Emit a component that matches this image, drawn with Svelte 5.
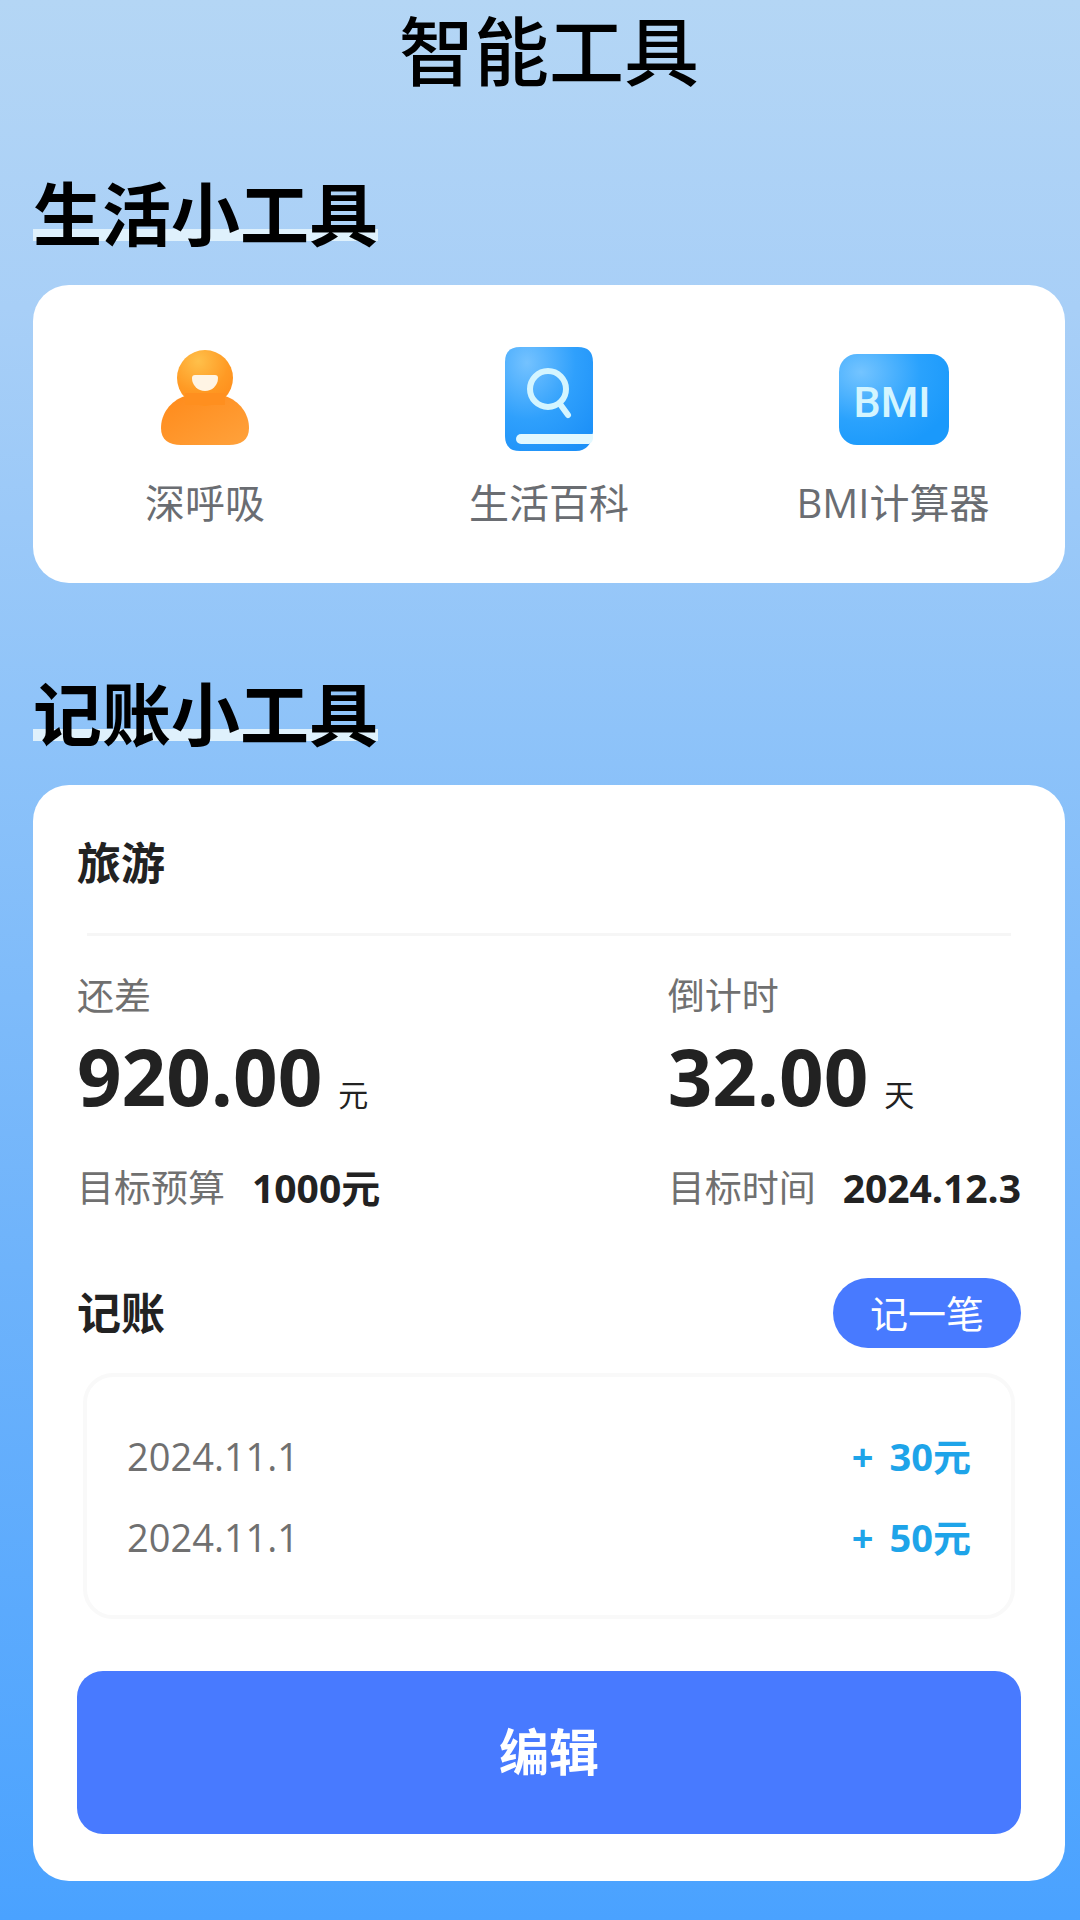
<!--
智能工具页面：生活小工具入口与旅游记账卡片。
-->
<script lang="ts">
	const tools = [
		{ id: 'breath', label: '深呼吸' },
		{ id: 'wiki', label: '生活百科' },
		{ id: 'bmi', label: 'BMI计算器' }
	];

	const stats = [
		{ label: '还差', value: '920.00', unit: '元', targetLabel: '目标预算', target: '1000元' },
		{ label: '倒计时', value: '32.00', unit: '天', targetLabel: '目标时间', target: '2024.12.3' }
	];

	let records = $state([
		{ date: '2024.11.1', amount: 30 },
		{ date: '2024.11.1', amount: 50 }
	]);
</script>

<main class="page">
	<h1>智能工具</h1>

	<section>
		<h2><span>生活小工具</span></h2>
		<div class="card tools">
			{#each tools as tool (tool.id)}
				<button type="button" class="tool">
					<svg class="tool-icon" viewBox="0 0 112 112" aria-hidden="true">
						{#if tool.id === 'breath'}
							<defs>
								<radialGradient id="head" cx="0.38" cy="0.2" r="0.9">
									<stop offset="0" stop-color="#ffc04a" />
									<stop offset="0.6" stop-color="#ff9a24" />
									<stop offset="1" stop-color="#ff8c1a" />
								</radialGradient>
								<linearGradient id="torso" x1="0" y1="0" x2="1" y2="1">
									<stop offset="0" stop-color="#ff8a1a" />
									<stop offset="1" stop-color="#ffa23c" />
								</linearGradient>
							</defs>
							<path
								d="M36 55C21 60 12 73 12 87c0 12 8 17 20 17h48c12 0 20-5 20-17 0-14-9-27-24-32z"
								fill="url(#torso)"
							/>
							<circle cx="56" cy="37" r="28" fill="url(#head)" />
							<path d="M36 52h40v12H36z" fill="#ff8f1f" />
							<path d="M46 34h20q3 0 3 3a13 13 0 0 1-26 0q0-3 3-3z" fill="#fff4e4" />
						{:else if tool.id === 'wiki'}
							<defs>
								<radialGradient id="book" cx="0.25" cy="0.15" r="1">
									<stop offset="0" stop-color="#74c2ff" />
									<stop offset="0.55" stop-color="#2fa0fc" />
									<stop offset="1" stop-color="#1c90f8" />
								</radialGradient>
							</defs>
							<path
								d="M27 6h58q15 0 15 15v70q-2 19-17 19H27q-15 0-15-15V21Q12 6 27 6z"
								fill="url(#book)"
							/>
							<circle cx="55" cy="48" r="18" fill="none" stroke="#d4f5ff" stroke-width="6" />
							<path d="M67 63l8 11" stroke="#d4f5ff" stroke-width="6" stroke-linecap="round" />
							<path d="M28 93h72v5q-1 4-4 5H28a5 5 0 0 1 0-10z" fill="#e2f8ff" />
						{:else}
							<defs>
								<radialGradient id="bmi" cx="0.2" cy="0.2" r="0.9">
									<stop offset="0" stop-color="#74c4ff" />
									<stop offset="0.6" stop-color="#2aa2fd" />
									<stop offset="1" stop-color="#1a99fb" />
								</radialGradient>
							</defs>
							<rect x="2" y="13" width="110" height="91" rx="18" fill="url(#bmi)" />
							<text x="55" y="76" text-anchor="middle" class="bmi-text">BMI</text>
						{/if}
					</svg>
					<span>{tool.label}</span>
				</button>
			{/each}
		</div>
	</section>

	<section>
		<h2><span>记账小工具</span></h2>
		<div class="card ledger">
			<h3>旅游</h3>
			<hr />

			<div class="stats">
				{#each stats as stat (stat.label)}
					<div class="stat">
						<p class="muted">{stat.label}</p>
						<p class="figure"><strong>{stat.value}</strong><span>{stat.unit}</span></p>
						<p class="target">
							<span class="muted">{stat.targetLabel}</span>
							<strong>{stat.target}</strong>
						</p>
					</div>
				{/each}
			</div>

			<div class="records-head">
				<h3>记账</h3>
				<button type="button" class="add">记一笔</button>
			</div>

			<ul class="records">
				{#each records as record}
					<li>
						<span class="date">{record.date}</span>
						<span class="amount"><span>+</span><span>{record.amount}元</span></span>
					</li>
				{/each}
			</ul>

			<button type="button" class="edit">编辑</button>
		</div>
	</section>
</main>

<style>
	:global(body) {
		margin: 0;
	}

	.page {
		box-sizing: border-box;
		min-height: 100vh;
		padding: 0 15px 39px 33px;
		background: linear-gradient(#b4d6f5 0%, #a8cff7 16%, #8ec3f9 38%, #6eb3fb 66%, #4aa2ff 100%);
		font-family: 'Open Sans', 'Noto Sans CJK SC', sans-serif;
		color: #222;
	}

	h1,
	h2,
	h3,
	p,
	ul {
		margin: 0;
		padding: 0;
	}

	button {
		border: none;
		padding: 0;
		font-family: inherit;
		cursor: pointer;
	}

	h1 {
		font-size: 75px;
		line-height: 102px;
		font-weight: 500;
		text-align: center;
		color: #000;
	}

	h2 {
		padding: 62px 0 21px;
		font-size: 69px;
		line-height: 100px;
		font-weight: 700;
		color: #000;
	}

	h2 span {
		display: inline-block;
		background: linear-gradient(#dff1fc, #dff1fc) 0 65px / 100% 12px no-repeat;
	}

	section + section h2 {
		padding-top: 81px;
	}

	h3 {
		font-size: 44px;
		line-height: 64px;
		font-weight: 700;
	}

	.card {
		border-radius: 36px;
		background: #fff;
	}

	.tools {
		display: grid;
		grid-template-columns: repeat(3, 1fr);
		padding: 56px 0 52px;
	}

	.tool {
		display: flex;
		flex-direction: column;
		align-items: center;
		gap: 22px;
		background: none;
		font-size: 40px;
		line-height: 56px;
		color: #6a6d72;
	}

	.tool-icon {
		width: 112px;
		height: 112px;
	}

	.bmi-text {
		font-family: Roboto, sans-serif;
		font-size: 43px;
		font-weight: 500;
		fill: #d4f5ff;
	}

	.ledger {
		padding: 46px 44px 47px;
	}

	hr {
		height: 3px;
		margin: 38px 10px 32px;
		border: none;
		background: #f6f6f6;
	}

	.stats {
		display: flex;
		justify-content: space-between;
	}

	.stat {
		font-size: 37px;
		line-height: 56px;
	}

	.muted {
		color: #707070;
	}

	.figure {
		display: flex;
		align-items: baseline;
		gap: 16px;
		margin: 8px 0 40px;
		font-size: 30px;
		line-height: 40px;
	}

	.figure strong {
		font-size: 78px;
		line-height: 88px;
	}

	.target {
		display: flex;
		gap: 27px;
		white-space: nowrap;
	}

	.target strong {
		font-size: 39px;
	}

	.records-head {
		display: flex;
		align-items: center;
		justify-content: space-between;
		margin-top: 62px;
	}

	.add {
		padding: 0 37px;
		border-radius: 35px;
		background: #487aff;
		font-size: 38px;
		line-height: 70px;
		color: #fff;
	}

	.records {
		display: grid;
		gap: 25px;
		margin: 25px 6px 52px;
		padding: 51px 40px 50px;
		border: 4px solid #f9f9f9;
		border-radius: 30px;
		list-style: none;
		font-size: 38px;
		line-height: 56px;
	}

	.records li {
		display: flex;
		justify-content: space-between;
	}

	.date {
		color: #707070;
	}

	.amount {
		display: flex;
		gap: 16px;
		font-weight: 700;
		color: #1ea4e9;
	}

	.edit {
		width: 100%;
		border-radius: 26px;
		background: #487aff;
		font-size: 50px;
		line-height: 163px;
		font-weight: 700;
		color: #fff;
	}
</style>
